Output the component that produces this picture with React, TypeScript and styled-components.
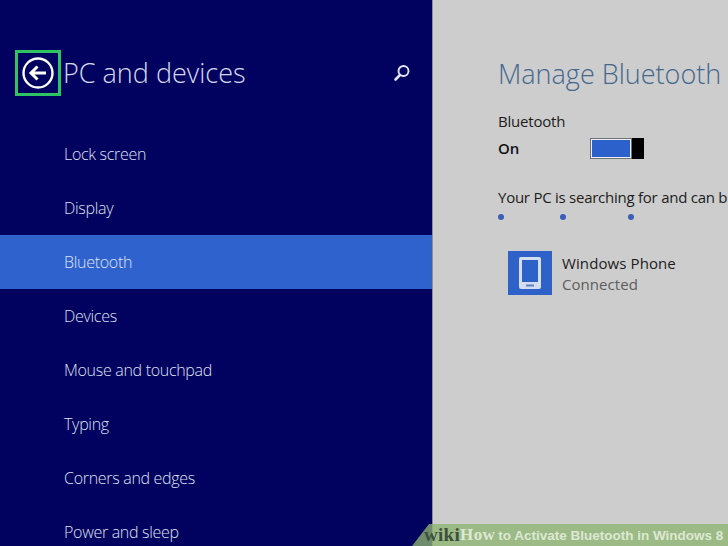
import * as React from 'react'
import styled, {createGlobalStyle} from 'styled-components'

const GlobalStyle = createGlobalStyle`
  html, body {
    margin: 0;
    padding: 0;
    background: #cdcdcd;
  }
  body {
    font-family: "Open Sans", "Noto Sans", sans-serif;
  }
`

const navItems = [
  'Lock screen',
  'Display',
  'Bluetooth',
  'Devices',
  'Mouse and touchpad',
  'Typing',
  'Corners and edges',
  'Power and sleep',
]

const Page = styled.div`
  position: relative;
  display: flex;
  width: 728px;
  height: 546px;
  overflow: hidden;
  background: #cdcdcd;
`

const Sidebar = styled.nav`
  width: 433px;
  flex: none;
  background: #01015f;
  border-right: 1px solid #8c8c9c;
  box-sizing: border-box;
`

const Header = styled.header`
  display: flex;
  align-items: center;
  height: 127px;
  padding: 19px 21px 0 15px;
  box-sizing: border-box;
`

const BackButton = styled.div`
  display: flex;
  align-items: center;
  justify-content: center;
  width: 46px;
  height: 46px;
  border: 3px solid #2fc462;
  box-sizing: border-box;
`

const Title = styled.h1`
  flex: 1;
  margin: 0 0 0 2px;
  color: #d6d9ee;
  font-size: 27px;
  font-weight: 300;
  line-height: 36px;
`

const NavRow = styled.div<{$active?: boolean}>`
  display: flex;
  align-items: center;
  height: 54px;
  padding-left: 64px;
  background: ${p => (p.$active ? '#2f62cd' : 'transparent')};
  color: #dfe2f1;
  font-size: 16px;
  font-weight: 300;
  line-height: 20px;
  letter-spacing: -0.3px;
`

const Content = styled.main`
  flex: 1;
  padding: 53px 0 0 65px;
  min-width: 0;
  white-space: nowrap;
  overflow: hidden;
`

const Heading = styled.h2`
  margin: 0 0 16px;
  color: #45688f;
  font-size: 27px;
  font-weight: 300;
  line-height: 42px;
`

const Label = styled.div`
  margin-bottom: 4px;
  color: #1c1c1c;
  font-size: 15px;
  line-height: 20px;
  letter-spacing: -0.2px;
`

const ToggleRow = styled.div`
  display: flex;
  align-items: center;
  height: 26px;
`

const ToggleState = styled.div`
  width: 92px;
  color: #111;
  font-size: 15px;
  font-weight: 600;
`

const Toggle = styled.div`
  display: flex;
  width: 54px;
  height: 21px;
`

const ToggleTrack = styled.div`
  flex: 1;
  background: #2c61cc;
  border: 2px solid #eef0f4;
  outline: 1px solid #6d7074;
  outline-offset: -1px;
  box-sizing: border-box;
`

const ToggleThumb = styled.div`
  width: 12px;
  background: #000;
`

const Status = styled.p`
  margin: 26px 0 0;
  color: #1c1c1c;
  font-size: 15px;
  line-height: 20px;
  letter-spacing: -0.25px;
`

const Dots = styled.div`
  display: flex;
  margin-top: 7px;
  height: 6px;
`

const Dot = styled.span<{$gap: number}>`
  width: 6px;
  height: 6px;
  margin-right: ${p => p.$gap}px;
  border-radius: 50%;
  background: #3a5fb8;
`

const Device = styled.div`
  display: flex;
  align-items: center;
  margin: 31px 0 0 10px;
`

const DeviceTile = styled.div`
  display: flex;
  align-items: center;
  justify-content: center;
  width: 44px;
  height: 44px;
  background: #2e62c8;
`

const DeviceText = styled.div`
  margin-left: 10px;
`

const DeviceName = styled.div`
  color: #1c1c1c;
  font-size: 15px;
  line-height: 22px;
  letter-spacing: 0.1px;
`

const DeviceStatus = styled.div`
  color: #5d5d5d;
  font-size: 15px;
  line-height: 21px;
  letter-spacing: 0.05px;
`

const Watermark = styled.div`
  position: absolute;
  left: 412px;
  right: 0;
  bottom: 0;
  display: flex;
  align-items: center;
  height: 22px;
  padding-left: 12px;
  background: rgba(142, 181, 113, 0.78);
  clip-path: polygon(17px 0, 100% 0, 100% 100%, 0 100%);
  color: #dde8d4;
  font-family: "Liberation Sans", Arial, sans-serif;
  font-size: 13.5px;
  font-weight: 700;
  white-space: pre;
`

const WikiMark = styled.span`
  color: #3c4f3c;
  font-family: "Liberation Serif", serif;
  font-size: 19px;
  letter-spacing: 0.3px;
`

const HowMark = styled.span`
  margin-right: 3px;
  font-family: "Liberation Serif", serif;
  font-size: 17px;
  letter-spacing: 0.4px;
`

const ArrowIcon = () => (
  <svg width="32" height="32" viewBox="0 0 32 32" fill="none" stroke="#fff">
    <circle cx="16" cy="16" r="14.5" strokeWidth="2.4" />
    <path d="M24 16H9M15.5 9.5 9 16l6.5 6.5" strokeWidth="3" />
  </svg>
)

const SearchIcon = () => (
  <svg width="18" height="18" viewBox="0 0 18 18" fill="none" stroke="#e4e6f4">
    <circle cx="10.5" cy="7" r="5" strokeWidth="1.9" />
    <path d="M7 11 2.5 15.5" strokeWidth="2.6" strokeLinecap="round" />
  </svg>
)

const PhoneIcon = () => (
  <svg width="22" height="32" viewBox="0 0 22 32">
    <rect x="0" y="0" width="22" height="32" rx="2" fill="#d5def0" />
    <rect x="3" y="3" width="16" height="22" fill="#2e62c8" />
    <rect x="7" y="27.5" width="8" height="2" fill="#5d7fc4" />
  </svg>
)

export default function App() {
  return (
    <Page>
      <GlobalStyle />
      <Sidebar>
        <Header>
          <BackButton>
            <ArrowIcon />
          </BackButton>
          <Title>PC and devices</Title>
          <SearchIcon />
        </Header>
        {navItems.map(item => (
          <NavRow key={item} $active={item === 'Bluetooth'}>
            {item}
          </NavRow>
        ))}
      </Sidebar>
      <Content>
        <Heading>Manage Bluetooth</Heading>
        <Label>Bluetooth</Label>
        <ToggleRow>
          <ToggleState>On</ToggleState>
          <Toggle>
            <ToggleTrack />
            <ToggleThumb />
          </Toggle>
        </ToggleRow>
        <Status>Your PC is searching for and can b</Status>
        <Dots>
          <Dot $gap={56} />
          <Dot $gap={62} />
          <Dot $gap={0} />
        </Dots>
        <Device>
          <DeviceTile>
            <PhoneIcon />
          </DeviceTile>
          <DeviceText>
            <DeviceName>Windows Phone</DeviceName>
            <DeviceStatus>Connected</DeviceStatus>
          </DeviceText>
        </Device>
      </Content>
      <Watermark>
        <WikiMark>wiki</WikiMark>
        <HowMark>How</HowMark>
        to Activate Bluetooth in Windows 8
      </Watermark>
    </Page>
  )
}
